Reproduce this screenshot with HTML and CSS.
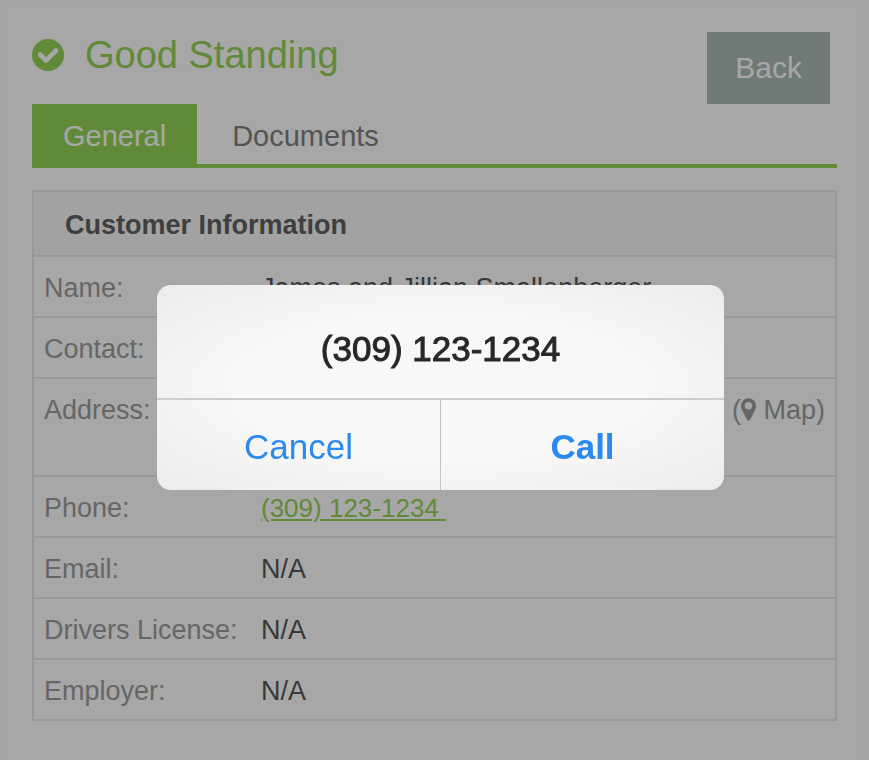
FILE: index.html
```html
<!DOCTYPE html>
<html lang="en">
<head>
  <meta charset="UTF-8">
  <meta name="viewport" content="width=device-width, initial-scale=1.0">
  <title>Customer Information</title>
  <link rel="stylesheet" href="styles.css">
</head>
<body>
  <main class="page">
    <header class="page-header">
      <h1 class="standing">
        <svg class="standing-icon" viewBox="0 0 32 32" aria-hidden="true">
          <circle cx="16" cy="16" r="16" fill="currentColor"/>
          <path d="M8 15.500l6 6L24 11.500" fill="none" stroke="#fff" stroke-width="4.600" stroke-linecap="round" stroke-linejoin="round"/>
        </svg>
        Good Standing
      </h1>
      <button type="button" class="back-btn">Back</button>
    </header>

    <nav class="tabs">
      <a href="#general" class="tab active">General</a>
      <a href="#documents" class="tab">Documents</a>
    </nav>

    <table class="info" id="general">
      <thead>
        <tr><th colspan="2">Customer Information</th></tr>
      </thead>
      <tbody>
        <tr><th scope="row">Name:</th><td>James and Jillian Smallenberger</td></tr>
        <tr><th scope="row">Contact:</th><td></td></tr>
        <tr class="address">
          <th scope="row">Address:</th>
          <td>
            <a href="#map" class="map-link">(<svg class="pin" viewBox="0 0 16 24" aria-hidden="true"><path fill="currentColor" fill-rule="evenodd" d="M8 0a8 8 0 0 0-8 8c0 2 .4 3.300 1.300 5L6.300 23c.6 1.300 2.800 1.300 3.400 0l5-10C15.600 11.300 16 10 16 8a8 8 0 0 0-8-8zm0 4a4 4 0 1 1 0 8 4 4 0 0 1 0-8z"/></svg> Map)</a>
          </td>
        </tr>
        <tr><th scope="row">Phone:</th><td><a href="tel:3091231234" class="phone">(309) 123-1234&nbsp;</a></td></tr>
        <tr><th scope="row">Email:</th><td>N/A</td></tr>
        <tr><th scope="row">Drivers License:</th><td>N/A</td></tr>
        <tr><th scope="row">Employer:</th><td>N/A</td></tr>
      </tbody>
    </table>
  </main>

  <div class="backdrop">
    <div class="alert" role="alertdialog" aria-modal="true" aria-labelledby="alertTitle">
      <h2 id="alertTitle" class="alert-title">(309) 123-1234</h2>
      <div class="alert-actions">
        <button type="button">Cancel</button>
        <button type="button" class="primary">Call</button>
      </div>
    </div>
  </div>
</body>
</html>
```
FILE: styles.css
```css
* {
  margin: 0;
  padding: 0;
  box-sizing: border-box;
}

:root {
  --green: #93d356;
  --line: #e8e8e8;
  --label: #9c9c9c;
  --text: #565656;
  --blue: #2b89f0;
}

body {
  font-family: "Liberation Sans", Arial, sans-serif;
  font-size: 27px;
  color: var(--text);
  background-color: #fcfcfc;
  padding: 6px 6px 0;
}

button {
  font-family: inherit;
  border: none;
  cursor: pointer;
}

.page {
  background-color: #fff;
  min-height: calc(100vh - 6px);
  padding: 26px 26px 40px;
}

/* Header */
.page-header {
  display: flex;
  justify-content: space-between;
  align-items: flex-start;
  padding-right: 7px;
}

.standing {
  display: flex;
  align-items: center;
  gap: 21px;
  color: var(--green);
  font-size: 38px;
  font-weight: normal;
  line-height: 46px;
}

.standing-icon {
  width: 32px;
  height: 32px;
}

.back-btn {
  background-color: #aabcb6;
  color: #fff;
  font-size: 30px;
  line-height: 36px;
  padding: 18px 28px;
}

/* Tabs */
.tabs {
  display: flex;
  gap: 4px;
  border-bottom: 4px solid var(--green);
  margin-bottom: 22px;
}

.tab {
  color: #808080;
  font-size: 29px;
  line-height: 36px;
  padding: 14px 31px 10px;
  text-decoration: none;
}

.tab.active {
  background-color: var(--green);
  color: #fff;
}

/* Customer table */
.info {
  width: 100%;
  border-collapse: collapse;
  border: 2px solid var(--line);
  line-height: 37px;
}

.info tr {
  border-bottom: 2px solid var(--line);
}

.info th,
.info td {
  padding: 13px 10px 9px;
  text-align: left;
  vertical-align: top;
}

.info tbody th {
  width: 218px;
  color: var(--label);
  font-weight: normal;
  white-space: nowrap;
}

.info thead th {
  background-color: #f8f8f8;
  color: #606060;
  padding: 15px 31px 11px;
}

.info .address td {
  height: 98px;
  text-align: right;
}

.map-link {
  color: var(--label);
  text-decoration: none;
}

.pin {
  width: 15px;
  height: 23px;
  vertical-align: -2px;
}

.phone {
  color: var(--green);
  font-size: 26px;
}

/* Call confirmation */
.backdrop {
  position: fixed;
  inset: 0;
  display: flex;
  justify-content: center;
  align-items: center;
  padding: 15px 0 0 12px;
  background-color: rgba(0, 0, 0, 0.345);
}

.alert {
  width: 100%;
  max-width: 567px;
  border-radius: 14px;
  overflow: hidden;
  background: radial-gradient(ellipse at center, #f8f8f7 50%, #ececec 100%);
  text-align: center;
}

.alert-title {
  color: #282828;
  font-size: 35px;
  font-weight: normal;
  line-height: 41px;
  padding: 43px 20px 29px;
  border-bottom: 2px solid #cdcdcd;
  -webkit-text-stroke: 1px currentColor;
}

.alert-actions {
  display: flex;
}

.alert-actions button {
  flex: 1;
  background: none;
  color: var(--blue);
  font-size: 35px;
  line-height: 42px;
  padding: 26px 10px 22px;
}

.alert-actions button + button {
  border-left: 1px solid #c4c4c4;
}

.alert-actions .primary {
  font-weight: bold;
}
```
